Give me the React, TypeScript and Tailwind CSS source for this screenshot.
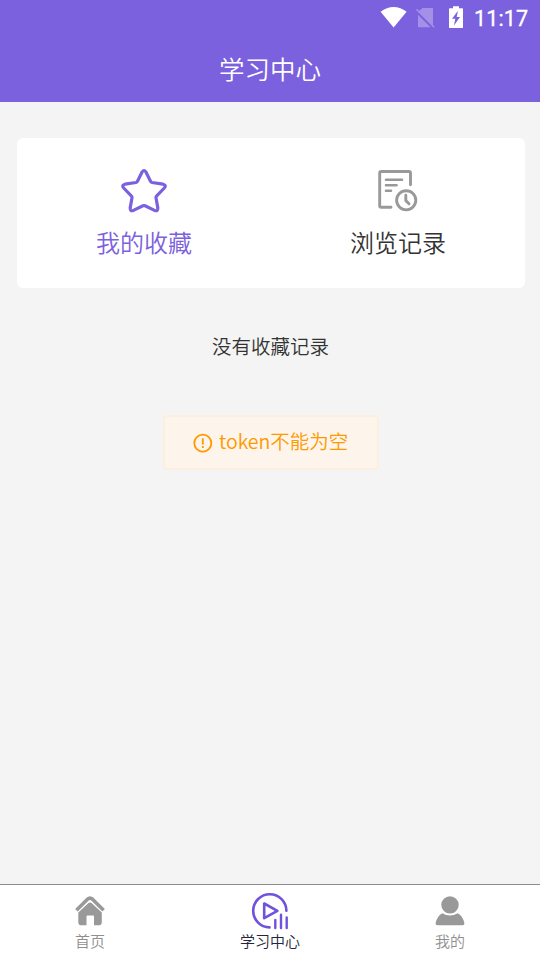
import type { ReactNode } from "react";

function StatusBar() {
  return (
    <div className="flex h-9 items-center justify-end font-['Roboto',sans-serif] text-white">
      <svg className="h-9 w-[170px]" viewBox="370 0 170 36" fill="currentColor">
        <path d="M380.6 11.7C388.5 5.3 398.8 5.3 406.6 11.7L393.6 27.6Z" />
        <g opacity="0.3">
          <path d="M422.5 8H433V25.2L418.2 11.8ZM418 14.7L430.5 27.2H418Z" />
          <path d="M416.5 9.3L434.2 27.3" stroke="currentColor" strokeWidth="1.6" />
        </g>
        <path
          fillRule="evenodd"
          d="M453 6.2H459V8.3H462.4Q463 8.3 463 9V27.3Q463 28 462.4 28H449.6Q449 28 449 27.3V9Q449 8.3 449.6 8.3H453ZM458 10.8L452 18.8H455.3L454 25.6L460 16.9H456.7Z"
        />
        <text x="474" y="26" fontSize="21.5" fontWeight="400" stroke="currentColor" strokeWidth="0.3" textLength="54">11:17</text>
      </svg>
    </div>
  );
}

function StarIcon() {
  return (
    <svg className="h-[50px] w-[50px]" viewBox="119 165 50 50" fill="none" stroke="#7b61de" strokeWidth="3.2" strokeLinejoin="round">
      <path d="M142.2 171.8Q144 169.2 145.8 171.8L150.5 181.3Q151 182.3 152 182.5L163 184.2Q166.8 185 164.3 188L156.5 196.1Q155.8 196.8 156 197.8L157.8 207.9Q158 211.7 154.6 210.4L145 205.7Q144 205.3 143 205.7L133.4 210.4Q130 211.7 130.2 207.9L132 197.8Q132.2 196.8 131.5 196.1L123.7 188Q121.2 185 125 184.2L136 182.5Q137 182.3 137.5 181.3Z" />
    </svg>
  );
}

function HistoryIcon() {
  return (
    <svg className="h-[50px] w-[50px]" viewBox="373 165 50 50" fill="none" stroke="#999" strokeWidth="2.9" strokeLinecap="round" strokeLinejoin="round">
      <path d="M391 207.3H381.2Q379.7 207.3 379.7 205.8V173Q379.7 171.5 381.2 171.5H409Q410.5 171.5 410.5 173V184.8" />
      <path d="M386 179.8H402M386 185.3H396.5M386 190.8H391" strokeWidth="2.6" />
      <circle cx="406.2" cy="200.3" r="9.6" />
      <path d="M405.8 195.3V200.6L409 203.8" />
    </svg>
  );
}

function HomeIcon() {
  return (
    <svg className="h-10 w-10" viewBox="70 890 40 40" fill="#999">
      <path d="M76.4 910.3L87.5 899.2Q90 897 92.5 899.2L103.6 910.3" fill="none" stroke="#999" strokeWidth="3.6" strokeLinecap="butt" />
      <path d="M78.3 912.6L88.5 903Q90 901.8 91.5 903L101.8 912.6V922.2Q101.8 925.3 98.7 925.3H94V916.5Q94 915.6 93.1 915.6H87.4Q86.5 915.6 86.5 916.5V925.3H81.4Q78.3 925.3 78.3 922.2Z" />
    </svg>
  );
}

function StudyIcon() {
  return (
    <svg className="h-10 w-10" viewBox="250 890 40 40" fill="none" stroke="#7052dc" strokeWidth="2.6" strokeLinecap="round" strokeLinejoin="round">
      <path d="M269.5 927.4A16.6 16.6 0 1 1 286.4 910.8" />
      <path d="M264.2 903.5V918.2L277.4 910.8Z" />
      <path d="M275.3 920V928M281 914.8V928M286.7 917.5V928" strokeWidth="2.4" />
    </svg>
  );
}

function UserIcon() {
  return (
    <svg className="h-10 w-10" viewBox="430 890 40 40" fill="#999">
      <circle cx="450" cy="904.9" r="8.7" />
      <path d="M442.3 913.2Q450 918 457.7 913.2Q463.3 916.5 464.4 923.2Q464.6 925.2 462.6 925.2H437.4Q435.4 925.2 435.6 923.2Q436.7 916.5 442.3 913.2Z" />
    </svg>
  );
}

function Card({ icon, label, color }: { icon: ReactNode; label: string; color: string }) {
  return (
    <button className={`flex flex-1 flex-col items-center pt-[27px] ${color}`}>
      {icon}
      <span className="mt-[9px] text-[24px] leading-9 font-[350]">{label}</span>
    </button>
  );
}

function Tab({ icon, label, color }: { icon: ReactNode; label: string; color: string }) {
  return (
    <button className={`flex flex-1 flex-col items-center pt-[5px] ${color}`}>
      {icon}
      <span className="text-[15px] leading-[22px] font-[350]">{label}</span>
    </button>
  );
}

export default function App() {
  return (
    <div className="flex h-[960px] w-[540px] flex-col overflow-hidden bg-[#f4f4f4] font-['Noto_Sans_CJK_SC',sans-serif] text-[#333]">
      <header className="h-[102px] bg-[#7b61de] text-white">
        <StatusBar />
        <h1 className="text-center text-[25.5px] leading-[64px] font-[350]">学习中心</h1>
      </header>
      <main className="flex flex-1 flex-col items-center">
        <div className="mt-9 ml-[2px] flex h-[150px] w-[508px] rounded-md bg-white">
          <Card icon={<StarIcon />} label="我的收藏" color="text-[#7b61de]" />
          <Card icon={<HistoryIcon />} label="浏览记录" color="text-[#333]" />
        </div>
        <p className="mt-[43px] ml-[1px] text-[19.5px] leading-[30px] font-[350]">没有收藏记录</p>
        <div className="mt-[54px] ml-[2px] flex h-[55px] w-[216px] items-center rounded border-2 border-[#fdefdf] bg-[#fdf5eb] pl-7 text-[#ff9900]">
          <svg className="h-5 w-5" viewBox="0 0 20 20" fill="none" stroke="currentColor" strokeWidth="1.8">
            <circle cx="9.8" cy="10.2" r="8.5" />
            <path d="M9.8 5.3V11.6M9.8 13V14.9" />
          </svg>
          <span className="mb-[3px] ml-[6px] text-[19.5px] leading-7 font-[350] whitespace-nowrap">token不能为空</span>
        </div>
      </main>
      <nav className="flex h-[76px] border-t border-[#8c8c8c] bg-white">
        <Tab icon={<HomeIcon />} label="首页" color="text-[#8f8f8f]" />
        <Tab icon={<StudyIcon />} label="学习中心" color="text-[#25253a]" />
        <Tab icon={<UserIcon />} label="我的" color="text-[#8f8f8f]" />
      </nav>
    </div>
  );
}
